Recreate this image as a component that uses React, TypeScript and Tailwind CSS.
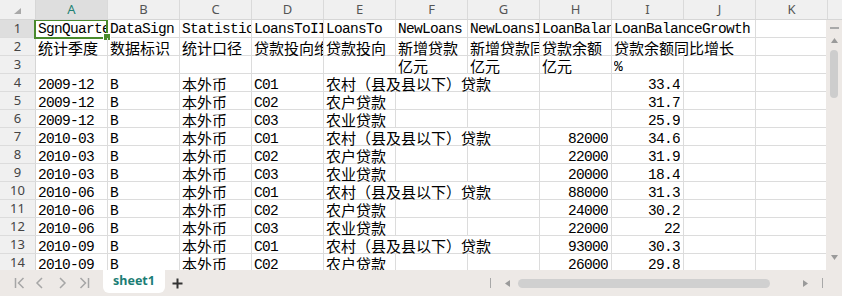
import React from "react";

type Cell = { t: string; span?: number; right?: boolean };

const COLS = ["A", "B", "C", "D", "E", "F", "G", "H", "I", "J", "K"];

const e = (n: number): Cell[] => Array.from({ length: n }, () => ({ t: "" }));

const dataRows: [string, string, string, string, string][] = [
  ["2009-12", "C01", "农村（县及县以下）贷款", "", "33.4"],
  ["2009-12", "C02", "农户贷款", "", "31.7"],
  ["2009-12", "C03", "农业贷款", "", "25.9"],
  ["2010-03", "C01", "农村（县及县以下）贷款", "82000", "34.6"],
  ["2010-03", "C02", "农户贷款", "22000", "31.9"],
  ["2010-03", "C03", "农业贷款", "20000", "18.4"],
  ["2010-06", "C01", "农村（县及县以下）贷款", "88000", "31.3"],
  ["2010-06", "C02", "农户贷款", "24000", "30.2"],
  ["2010-06", "C03", "农业贷款", "22000", "22"],
  ["2010-09", "C01", "农村（县及县以下）贷款", "93000", "30.3"],
  ["2010-09", "C02", "农户贷款", "26000", "29.8"],
];

const rows: Cell[][] = [
  [
    { t: "SgnQuarter" },
    { t: "DataSign" },
    { t: "StatisticalCaliber" },
    { t: "LoansToIIType" },
    { t: "LoansTo" },
    { t: "NewLoans" },
    { t: "NewLoansIncrease" },
    { t: "LoanBalance" },
    { t: "LoanBalanceGrowth", span: 2 },
    { t: "" },
  ],
  [
    { t: "统计季度" },
    { t: "数据标识" },
    { t: "统计口径" },
    { t: "贷款投向维度" },
    { t: "贷款投向" },
    { t: "新增贷款" },
    { t: "新增贷款同比" },
    { t: "贷款余额" },
    { t: "贷款余额同比增长", span: 2 },
    { t: "" },
  ],
  [...e(5), { t: "亿元" }, { t: "亿元" }, { t: "亿元" }, { t: "%" }, ...e(2)],
  ...dataRows.map(([d, code, name, bal, g]) => {
    const base: Cell[] = [{ t: d }, { t: "B" }, { t: "本外币" }, { t: code }];
    const mid: Cell[] = name.length > 6 ? [{ t: name, span: 3 }] : [{ t: name }, { t: "" }, { t: "" }];
    return [...base, ...mid, { t: bal, right: true }, { t: g, right: true }, { t: "" }, { t: "" }];
  }),
];

const widthClass: Record<number, string> = {
  1: "w-[72px]",
  2: "w-[144px]",
  3: "w-[216px]",
};

const isCJK = (s: string) => /[\u3000-\u9fff\uff00-\uffef]/.test(s);

function CjkText({ t }: { t: string }) {
  const parts = t.split(/([（）])/).filter((p) => p !== "");
  return (
    <>
      {parts.map((p, i) =>
        p === "（" ? (
          <span key={i} className="inline-block w-[15px] text-right">
            （
          </span>
        ) : p === "）" ? (
          <span key={i} className="inline-block w-[15px] text-left">
            ）
          </span>
        ) : (
          <span key={i}>{p}</span>
        )
      )}
    </>
  );
}

function GridCell({ c, selected, first }: { c: Cell; selected?: boolean; first?: boolean }) {
  const cjk = isCJK(c.t);
  return (
    <div
      className={`relative shrink-0 h-full border-r border-[#dcdcdc] whitespace-nowrap text-black ${
        widthClass[c.span ?? 1]
      } ${c.right ? "text-right pr-[3px]" : "pl-[2px]"} ${
        cjk
          ? "font-['Noto_Sans_CJK_SC',sans-serif] text-[15px] leading-[19px]"
          : first
          ? "font-['Liberation_Mono','Noto_Sans_CJK_SC',monospace] text-[14.5px] tracking-[-0.7px] leading-[19px]"
          : "font-['Liberation_Mono','Noto_Sans_CJK_SC',monospace] text-[14.5px] tracking-[-0.7px] leading-[23px]"
      }`}
    >
      <div className="overflow-x-clip h-full">{cjk ? <CjkText t={c.t} /> : c.t}</div>
      {selected && (
        <>
          <span className="absolute left-[-2px] top-[-1px] right-[-1px] bottom-[-2px] border-2 border-[#4a8a2c] pointer-events-none" />
          <span className="absolute right-[-4px] bottom-[-4px] w-[6px] h-[6px] bg-[#4a8a2c] border border-white box-content" />
        </>
      )}
    </div>
  );
}

function Chevron({ kind }: { kind: "first" | "prev" | "next" | "last" }) {
  return (
    <svg width="12" height="12" viewBox="0 0 12 12" fill="none" stroke="#a6a6a6" strokeWidth="1.5">
      {kind === "first" && (
        <>
          <line x1="1.5" y1="1" x2="1.5" y2="11" />
          <polyline points="9.5,1 4.5,6 9.5,11" />
        </>
      )}
      {kind === "prev" && <polyline points="8,1 3,6 8,11" />}
      {kind === "next" && <polyline points="4,1 9,6 4,11" />}
      {kind === "last" && (
        <>
          <polyline points="2.5,1 7.5,6 2.5,11" />
          <line x1="10.5" y1="1" x2="10.5" y2="11" />
        </>
      )}
    </svg>
  );
}

export default function App() {
  return (
    <div className="w-[842px] h-[296px] overflow-hidden flex flex-col bg-white select-none">
      {/* column header */}
      <div className="flex h-[20px] shrink-0 bg-[#f0f0f0] border-b border-[#d6d6d6]">
        <div className="w-[36px] shrink-0 border-r border-[#d6d6d6] flex items-end justify-end pr-[14px] pb-[5px]">
          <svg width="7" height="6" viewBox="0 0 7 6">
            <polygon points="7,0 7,6 0,6" fill="#a8a8a8" />
          </svg>
        </div>
        {COLS.map((c) => (
          <div
            key={c}
            className={`w-[72px] shrink-0 border-r border-[#dadada] text-center text-[13px] leading-[19px] font-['Noto_Sans',sans-serif] ${
              c === "A" ? "bg-[#dedede] text-[#1f8274]" : "text-[#555]"
            }`}
          >
            {c}
          </div>
        ))}
      </div>

      {/* body + vertical scrollbar */}
      <div className="flex h-[250px] shrink-0">
        <div className="w-[826px] shrink-0 overflow-hidden">
          {rows.map((r, i) => (
            <div key={i} className="flex h-[18px] border-b border-[#dcdcdc]">
              <div
                className={`w-[36px] shrink-0 border-r border-[#d6d6d6] text-center text-[13px] leading-[17px] font-['Noto_Sans',sans-serif] text-[#444] ${
                  i === 0 ? "bg-[#dedede]" : "bg-[#f0f0f0]"
                }`}
              >
                {i + 1}
              </div>
              {r.map((c, j) => (
                <GridCell key={j} c={c} selected={i === 0 && j === 0} first={i === 0} />
              ))}
            </div>
          ))}
        </div>
        <div className="w-[16px] shrink-0 bg-[#ede9e6] flex flex-col items-center">
          <div className="mt-[7px] w-[9px] h-[2px] bg-[#a9a9a9]" />
          <svg className="mt-[9px]" width="7" height="5" viewBox="0 0 7 5">
            <polygon points="3.5,0 7,5 0,5" fill="#9a9a9a" />
          </svg>
          <div className="mt-[7px] w-[8px] h-[48px] rounded-full bg-[#cdcdcd]" />
          <div className="flex-1" />
          <svg className="mb-[10px]" width="7" height="5" viewBox="0 0 7 5">
            <polygon points="0,0 7,0 3.5,5" fill="#9a9a9a" />
          </svg>
        </div>
      </div>

      {/* tab bar */}
      <div className="flex h-[26px] shrink-0 bg-[#ede9e6] items-start">
        <div className="flex items-center h-[26px]">
          <span className="ml-[14px]">
            <Chevron kind="first" />
          </span>
          <span className="ml-[8px]">
            <Chevron kind="prev" />
          </span>
          <span className="ml-[10px]">
            <Chevron kind="next" />
          </span>
          <span className="ml-[10px]">
            <Chevron kind="last" />
          </span>
        </div>
        <div className="ml-[13px] w-[62px] h-[23px] bg-white rounded-b-[6px] flex items-center justify-center font-['Noto_Sans',sans-serif] font-bold text-[12.5px] text-[#1b7d75]">
          sheet1
        </div>
        <div className="ml-[7px] h-[26px] flex items-center">
          <svg width="11" height="11" viewBox="0 0 11 11" stroke="#333" strokeWidth="2">
            <line x1="5.5" y1="0.5" x2="5.5" y2="10.5" />
            <line x1="0.5" y1="5.5" x2="10.5" y2="5.5" />
          </svg>
        </div>
        <div className="flex-1" />
        <div className="w-[353px] h-[26px] flex items-center">
          <span className="ml-[1px] w-px h-[10px] bg-[#a8a8a8]" />
          <svg className="ml-[14px]" width="5" height="7" viewBox="0 0 5 7">
            <polygon points="5,0 5,7 0,3.5" fill="#9a9a9a" />
          </svg>
          <div className="ml-[8px] w-[252px] h-[9px] rounded-full bg-[#d0d0d0]" />
          <svg className="ml-[33px]" width="5" height="7" viewBox="0 0 5 7">
            <polygon points="0,0 0,7 5,3.5" fill="#9a9a9a" />
          </svg>
          <span className="ml-[14px] w-px h-[10px] bg-[#a8a8a8]" />
        </div>
      </div>
    </div>
  );
}
